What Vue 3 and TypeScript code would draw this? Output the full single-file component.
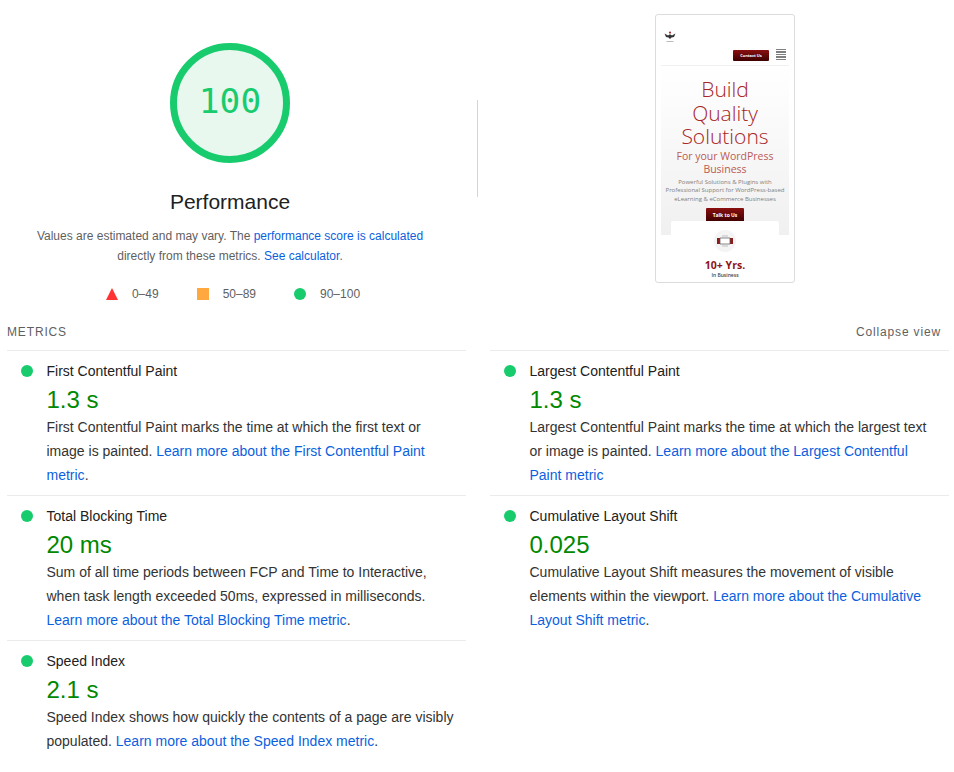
<script setup lang="ts">
interface Metric {
  title: string
  value: string
  text: string
  link: string
  end: string
}

const leftMetrics: Metric[] = [
  {
    title: 'First Contentful Paint',
    value: '1.3 s',
    text: 'First Contentful Paint marks the time at which the first text or image is painted. ',
    link: 'Learn more about the First Contentful Paint metric',
    end: '.',
  },
  {
    title: 'Total Blocking Time',
    value: '20 ms',
    text: 'Sum of all time periods between FCP and Time to Interactive, when task length exceeded 50ms, expressed in milliseconds. ',
    link: 'Learn more about the Total Blocking Time metric',
    end: '.',
  },
  {
    title: 'Speed Index',
    value: '2.1 s',
    text: 'Speed Index shows how quickly the contents of a page are visibly populated. ',
    link: 'Learn more about the Speed Index metric',
    end: '.',
  },
]

const rightMetrics: Metric[] = [
  {
    title: 'Largest Contentful Paint',
    value: '1.3 s',
    text: 'Largest Contentful Paint marks the time at which the largest text or image is painted. ',
    link: 'Learn more about the Largest Contentful Paint metric',
    end: '',
  },
  {
    title: 'Cumulative Layout Shift',
    value: '0.025',
    text: 'Cumulative Layout Shift measures the movement of visible elements within the viewport. ',
    link: 'Learn more about the Cumulative Layout Shift metric',
    end: '.',
  },
]

const columns = [leftMetrics, rightMetrics]
</script>

<template>
  <div class="report">
    <section class="top">
      <div class="score">
        <div class="gauge">
          <svg width="120" height="120" viewBox="0 0 120 120">
            <circle cx="60" cy="60" r="56.5" fill="#e8f8ef" stroke="#18cc6e" stroke-width="7" />
          </svg>
          <span class="gauge__num">100</span>
        </div>
        <h2 class="score__title">Performance</h2>
        <p class="score__note">
          Values are estimated and may vary. The <a>performance score is calculated</a>
          directly from these metrics. <a>See calculator</a>.
        </p>
        <div class="legend">
          <span class="legend__item">
            <svg width="12" height="12" viewBox="0 0 12 12"><path d="M6 0 12 12H0Z" fill="#ff3333" /></svg>
            0–49
          </span>
          <span class="legend__item">
            <svg width="12" height="12" viewBox="0 0 12 12"><rect width="12" height="12" fill="#ffa83f" /></svg>
            50–89
          </span>
          <span class="legend__item">
            <svg width="12" height="12" viewBox="0 0 12 12"><circle cx="6" cy="6" r="6" fill="#18cc6e" /></svg>
            90–100
          </span>
        </div>
      </div>

      <div class="divider"></div>

      <div class="thumb-wrap">
        <div class="thumb">
          <div class="thumb__logo">
            <svg width="12" height="12" viewBox="0 0 12 12">
              <circle cx="6" cy="1.6" r="1.1" fill="#a33" />
              <path d="M.5 2.5 4 4.500 6 3.200 8 4.500 11.500 2.500 10 6 7.500 6.600 6 8 4.500 6.600 2 6Z" fill="#333" />
              <path d="M2.500 10.500h7" stroke="#aaa" stroke-width=".8" />
            </svg>
          </div>
          <div class="thumb__nav">
            <span class="thumb__btn">Contact Us</span>
            <span class="thumb__burger"><i></i><i></i><i></i><i></i><i></i></span>
          </div>
          <div class="thumb__hero">
            <div class="thumb__h1">Build Quality Solutions</div>
            <div class="thumb__h2">For your WordPress Business</div>
            <div class="thumb__p">Powerful Solutions &amp; Plugins with<br />Professional Support for WordPress-based<br />eLearning &amp; eCommerce Businesses</div>
            <span class="thumb__cta">Talk to Us</span>
          </div>
          <div class="thumb__card">
            <span class="thumb__badge">
              <svg width="16" height="12" viewBox="0 0 16 12">
                <rect x="0" y="3" width="3" height="6" fill="#8c1c1c" />
                <rect x="13" y="3" width="3" height="6" fill="#8c1c1c" />
                <path d="M3 3h10v6H3Z" fill="#fff" stroke="#555" stroke-width=".7" />
                <path d="M5 1h6M5 11h6" stroke="#aaa" stroke-width=".7" />
              </svg>
            </span>
            <div class="thumb__yrs">10+ Yrs.</div>
            <div class="thumb__biz">In Business</div>
          </div>
        </div>
      </div>
    </section>

    <div class="heading">
      <span class="heading__label">METRICS</span>
      <span class="heading__toggle">Collapse view</span>
    </div>

    <section class="metrics">
      <div v-for="(col, i) in columns" :key="i" class="metrics__col">
        <article v-for="m in col" :key="m.title" class="metric">
          <div class="metric__title"><span class="metric__dot"></span>{{ m.title }}</div>
          <div class="metric__value">{{ m.value }}</div>
          <p class="metric__text">{{ m.text }}<a>{{ m.link }}</a>{{ m.end }}</p>
        </article>
      </div>
    </section>
  </div>
</template>

<style>
html,
body {
  background: #fff;
}
</style>

<style scoped>
.report {
  width: 954px;
  height: 772px;
  overflow: hidden;
  font-family: "Liberation Sans", Arial, sans-serif;
  color: #212121;
  background: #fff;
}

a {
  color: #0b5fe0;
}

.top {
  display: flex;
  height: 321px;
}

.score {
  width: 460px;
  flex: none;
  display: flex;
  flex-direction: column;
  align-items: center;
  padding-top: 43px;
}

.gauge {
  position: relative;
  width: 120px;
  height: 120px;
}

.gauge__num {
  position: absolute;
  inset: 0 0 4px;
  display: flex;
  align-items: center;
  justify-content: center;
  font-family: "DejaVu Sans Mono", monospace;
  font-size: 34.5px;
  color: #18cc6e;
}

.score__title {
  margin: 24px 0 0;
  font-size: 21px;
  line-height: 30px;
  font-weight: 400;
}

.score__note {
  width: 400px;
  margin: 9px 0 0;
  font-size: 12px;
  line-height: 20px;
  text-align: center;
  color: #5f5f5f;
}

.legend {
  display: flex;
  gap: 38px;
  margin: 20px 0 0 6px;
  font-size: 12px;
  line-height: 16px;
  color: #5f5f5f;
}

.legend__item {
  display: flex;
  align-items: center;
  gap: 14px;
}

.divider {
  flex: none;
  width: 1px;
  height: 97px;
  margin: 100px 0 0 17px;
  background: #d5d5d5;
}

.thumb-wrap {
  padding: 14px 0 0 177px;
}

.thumb {
  width: 140px;
  height: 269px;
  box-sizing: border-box;
  padding: 0 5px;
  overflow: hidden;
  border: 1px solid #dcdcdc;
  border-radius: 3px;
  font-family: "Open Sans", sans-serif;
  background: #fff;
}

.thumb__logo {
  height: 33px;
  padding: 11px 0 0 3px;
  box-sizing: border-box;
}

.thumb__nav {
  display: flex;
  align-items: flex-start;
  justify-content: flex-end;
  gap: 7px;
  height: 18px;
  padding: 2px 3px 0 0;
  box-sizing: border-box;
  border-bottom: 1px solid #f0f0f0;
}

.thumb__btn {
  width: 36px;
  height: 11px;
  border-radius: 1px;
  font-size: 4px;
  line-height: 11px;
  font-weight: 700;
  text-align: center;
  color: #fff;
  background: linear-gradient(#8a0f0f, #3d0000);
}

.thumb__burger {
  display: flex;
  flex-direction: column;
  gap: 1px;
  width: 10px;
  margin-top: -1px;
}

.thumb__burger i {
  height: 1.4px;
  background: #808080;
}

.thumb__hero {
  height: 169px;
  padding-top: 12px;
  box-sizing: border-box;
  text-align: center;
  background: linear-gradient(#fff, #f0f0f0);
}

.thumb__h1 {
  width: 100px;
  margin: 0 auto;
  font-size: 21px;
  line-height: 23.5px;
  font-weight: 300;
  color: #a72626;
}

.thumb__h2 {
  width: 105px;
  margin: 1px auto 0;
  font-size: 10.5px;
  line-height: 13px;
  color: #bb5a52;
}

.thumb__p {
  margin-top: 2px;
  font-size: 6px;
  line-height: 8.7px;
  white-space: nowrap;
  color: #808080;
}

.thumb__cta {
  display: block;
  width: 38px;
  height: 14px;
  margin: 4.5px auto 0;
  border-radius: 1px;
  font-size: 5px;
  line-height: 14px;
  font-weight: 700;
  color: #fff;
  background: linear-gradient(#8a0f0f, #3d0000);
}

.thumb__card {
  position: relative;
  width: 108px;
  height: 70px;
  margin: -14px auto 0;
  padding-top: 9px;
  box-sizing: border-box;
  text-align: center;
  border-radius: 2px;
  background: #fff;
}

.thumb__badge {
  display: flex;
  align-items: center;
  justify-content: center;
  width: 22px;
  height: 22px;
  margin: 0 auto;
  border-radius: 50%;
  background: #f4f4f4;
}

.thumb__yrs {
  margin-top: 7px;
  font-size: 10.5px;
  line-height: 13px;
  font-weight: 700;
  color: #8e1414;
}

.thumb__biz {
  font-size: 5px;
  line-height: 6px;
  font-weight: 600;
  color: #444;
}

.heading {
  display: flex;
  justify-content: space-between;
  height: 21px;
  padding: 0 13px 8px 7px;
  align-items: center;
  font-size: 12px;
  line-height: 20px;
  letter-spacing: 0.85px;
  color: #5f5f5f;
}

.metrics {
  display: flex;
  gap: 24px;
  padding-left: 7px;
}

.metrics__col {
  width: 459px;
  flex: none;
}

.metric {
  height: 145px;
  box-sizing: border-box;
  padding: 8px 8px 0 39.5px;
  border-top: 1px solid #ebebeb;
}

.metric__title {
  position: relative;
  font-size: 14px;
  line-height: 24px;
}

.metric__dot {
  position: absolute;
  left: -25.5px;
  top: 6px;
  width: 12px;
  height: 12px;
  border-radius: 50%;
  background: #18cc6e;
}

.metric__value {
  padding-top: 1px;
  font-size: 24px;
  line-height: 31px;
  color: #008800;
}

.metric__text {
  margin: 0;
  font-size: 14px;
  line-height: 24px;
  color: #333;
}
</style>
